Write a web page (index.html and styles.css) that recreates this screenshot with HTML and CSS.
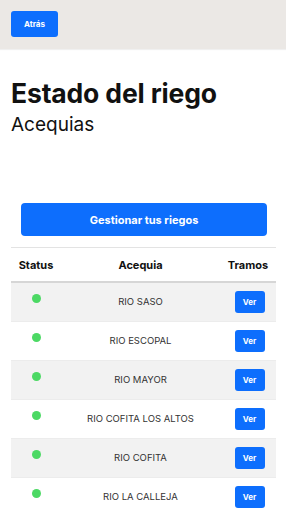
FILE: index.html
```html
<!DOCTYPE html>
<html lang="es">
<head>
    <meta charset="UTF-8">
    <meta name="viewport" content="width=device-width, initial-scale=1.0">
    <title>Estado del riego</title>
    <link rel="stylesheet" href="styles.css">
</head>
<body>
    <div class="topbar">
        <button class="btn btn-back">Atrás</button>
    </div>
    <div class="content">
        <h1 class="title">Estado del riego</h1>
        <h2 class="subtitle">Acequias</h2>

        <button class="btn btn-manage">Gestionar tus riegos</button>

        <table class="tabla">
            <thead>
                <tr>
                    <th class="col-status">Status</th>
                    <th>Acequia</th>
                    <th class="col-tramos">Tramos</th>
                </tr>
            </thead>
            <tbody>
                <tr>
                    <td class="col-status"><span class="dot"></span></td>
                    <td>RIO SASO</td>
                    <td class="col-tramos"><button class="btn btn-ver">Ver</button></td>
                </tr>
                <tr>
                    <td class="col-status"><span class="dot"></span></td>
                    <td>RIO ESCOPAL</td>
                    <td class="col-tramos"><button class="btn btn-ver">Ver</button></td>
                </tr>
                <tr>
                    <td class="col-status"><span class="dot"></span></td>
                    <td>RIO MAYOR</td>
                    <td class="col-tramos"><button class="btn btn-ver">Ver</button></td>
                </tr>
                <tr>
                    <td class="col-status"><span class="dot"></span></td>
                    <td>RIO COFITA LOS ALTOS</td>
                    <td class="col-tramos"><button class="btn btn-ver">Ver</button></td>
                </tr>
                <tr>
                    <td class="col-status"><span class="dot"></span></td>
                    <td>RIO COFITA</td>
                    <td class="col-tramos"><button class="btn btn-ver">Ver</button></td>
                </tr>
                <tr>
                    <td class="col-status"><span class="dot"></span></td>
                    <td>RIO LA CALLEJA</td>
                    <td class="col-tramos"><button class="btn btn-ver">Ver</button></td>
                </tr>
            </tbody>
        </table>
    </div>
</body>
</html>
```

FILE: styles.css
```css
body {
    font-family: Inter, "Noto Sans", sans-serif;
    background: #fff;
    color: #212529;
    margin: 0;
}
.topbar {
    background: #ebe8e5;
    height: 49px;
    padding: 11px 11px 0;
    box-sizing: border-box;
    box-shadow: 0 1px 1px rgba(0,0,0,0.06);
}
.btn {
    font-family: inherit;
    border: none;
    background: #0d6efd;
    color: #fff;
    font-weight: 700;
    border-radius: 3px;
    cursor: pointer;
}
.btn-back {
    width: 47px;
    height: 26px;
    font-size: 8px;
    padding: 0;
}
.content {
    padding: 0 10px 0 11px;
}
.title {
    font-size: 26.5px;
    font-weight: 700;
    color: #111;
    margin: 28px 0 0;
    line-height: 32px;
    letter-spacing: -0.15px;
}
.subtitle {
    font-size: 19px;
    font-weight: 400;
    color: #111;
    margin: 4px 0 0;
    line-height: 24px;
}
.btn-manage {
    display: block;
    width: 246px;
    height: 33px;
    margin: 66px 0 0 10px;
    font-size: 11px;
    border-radius: 4px;
}
.tabla {
    width: 265px;
    border-collapse: collapse;
    margin-top: 11px;
    border-top: 1px solid #e3e3e3;
}
.tabla th {
    font-size: 11px;
    font-weight: 700;
    color: #111;
    height: 33px;
    padding: 0;
    text-align: center;
    border-bottom: 2px solid #d6d6d6;
}
.tabla tbody tr {
    height: 39px;
}
.tabla td {
    font-size: 9.5px;
    color: #333;
    padding: 0;
    text-align: center;
    border-bottom: 1px solid #ececec;
}
.tabla tbody tr:nth-child(odd) {
    background: #f2f2f2;
}
.col-status {
    width: 50px;
}
.tabla td.col-status {
    vertical-align: top;
    padding-top: 11px;
}
.col-tramos {
    width: 56px;
}
.dot {
    display: block;
    margin: 0 auto;
    width: 9px;
    height: 9px;
    border-radius: 50%;
    background: #4cd964;
}
.btn-ver {
    width: 30px;
    height: 22px;
    font-size: 8px;
    padding: 0;
    margin-left: 3px;
}
```
